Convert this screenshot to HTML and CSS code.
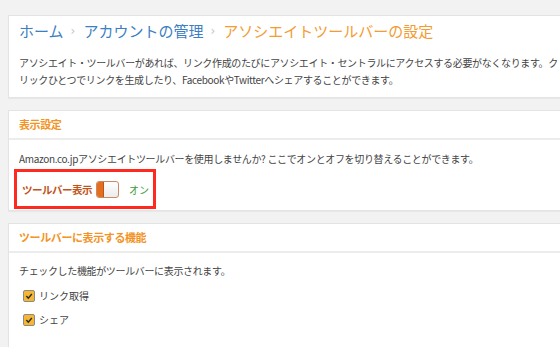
FILE: index.html
```html
<!DOCTYPE html>
<html lang="ja">
<head>
<meta charset="utf-8">
<link rel="stylesheet" href="styles.css">
</head>
<body>
<div class="page">
  <section class="card intro">
    <nav class="crumbs">
      <a class="crumb">ホーム</a>
      <span class="sep">›</span>
      <a class="crumb">アカウントの管理</a>
      <span class="sep">›</span>
      <span class="current">アソシエイトツールバーの設定</span>
    </nav>
    <p class="desc">アソシエイト・ツールバーがあれば、リンク作成のたびにアソシエイト・セントラルにアクセスする必要がなくなります。ク<br>リックひとつでリンクを生成したり、FacebookやTwitterへシェアすることができます。</p>
  </section>

  <section class="card">
    <h2 class="card-head">表示設定</h2>
    <div class="card-body settings">
      <p class="text">Amazon.co.jpアソシエイトツールバーを使用しませんか? ここでオンとオフを切り替えることができます。</p>
      <div class="highlight">
        <span class="toggle-label">ツールバー表示</span>
        <span class="toggle"><span class="toggle-on"></span></span>
        <span class="toggle-state">オン</span>
      </div>
    </div>
  </section>

  <section class="card">
    <h2 class="card-head">ツールバーに表示する機能</h2>
    <div class="card-body features">
      <p class="text">チェックした機能がツールバーに表示されます。</p>
      <label class="check"><span class="box"><svg viewBox="0 0 10 10" width="10" height="10"><path d="M2.3 5.1 L4.3 7.1 L7.8 3" fill="none" stroke="#2b2b2b" stroke-width="1.4"/></svg></span>リンク取得</label>
      <label class="check"><span class="box"><svg viewBox="0 0 10 10" width="10" height="10"><path d="M2.3 5.1 L4.3 7.1 L7.8 3" fill="none" stroke="#2b2b2b" stroke-width="1.4"/></svg></span>シェア</label>
    </div>
  </section>
</div>
</body>
</html>
```

FILE: styles.css
```css
html, body {
  margin: 0;
  padding: 0;
  background: #f2f2f2;
  overflow: hidden;
}
body {
  width: 560px;
  height: 347px;
  font-family: "Noto Sans CJK JP", "Noto Sans", sans-serif;
  color: #444;
}
.page {
  padding: 15px 0 0 8px;
  width: 600px;
  display: flex;
  flex-direction: column;
  gap: 12px;
}
.card {
  background: #fff;
  border: 1px solid #e4e4e4;
  box-shadow: 0 1px 1px rgba(0,0,0,0.04);
}
.intro {
  padding: 5px 10px 9px 10px;
}
.crumbs {
  display: flex;
  align-items: center;
  font-size: 15px;
  line-height: 20px;
  white-space: nowrap;
}
.crumb {
  color: #3d7fc2;
}
.sep {
  color: #c6c6c6;
  font-size: 12px;
  font-family: "DejaVu Sans", sans-serif;
  margin: 0 8px 0 7px;
}
.current {
  color: #f39c33;
}
.desc {
  margin: 13px 0 0 0;
  font-size: 10px;
  letter-spacing: -0.35px;
  line-height: 17px;
  color: #444;
  white-space: nowrap;
}
.card-head {
  margin: 0;
  padding: 0 10px;
  height: 27px;
  line-height: 27px;
  font-size: 11px;
  letter-spacing: -0.4px;
  font-weight: bold;
  color: #f39324;
  border-bottom: 2px solid #ececec;
}
.card-body {
  padding: 11px 10px 1px 10px;
}
.features {
  padding-top: 10px;
  height: 100px;
}
.text {
  margin: 0;
  font-size: 10px;
  letter-spacing: -0.35px;
  line-height: 16px;
  white-space: nowrap;
}
.highlight {
  margin: 2px 0 0 -5px;
  width: 131px;
  height: 34px;
  border: 3px solid #ff2a1f;
  display: flex;
  align-items: center;
  padding-left: 5px;
}
.toggle-label {
  font-size: 10.5px;
  letter-spacing: -0.5px;
  font-weight: bold;
  color: #c0541b;
}
.toggle {
  margin-left: 4px;
  width: 21px;
  height: 15px;
  border: 1px solid #c98a64;
  border-radius: 3px;
  background: linear-gradient(#ffffff, #ececec);
  display: flex;
  overflow: hidden;
}
.toggle-on {
  width: 6px;
  background: #e46e1f;
  border-right: 1px solid #b8561a;
}
.toggle-state {
  margin-left: 10px;
  font-size: 10px;
  color: #3e9a3a;
}
.check {
  display: flex;
  align-items: center;
  gap: 4px;
  margin: 11px 0 0 4px;
  font-size: 10px;
  line-height: 12px;
  color: #444;
}
.check + .check {
  margin-top: 12px;
}
.box {
  width: 10px;
  height: 10px;
  background: #f6b532;
  border: 1px solid #8a8a8a;
  border-radius: 2px;
  display: flex;
  align-items: center;
  justify-content: center;
}
.box svg {
  display: block;
}
```
